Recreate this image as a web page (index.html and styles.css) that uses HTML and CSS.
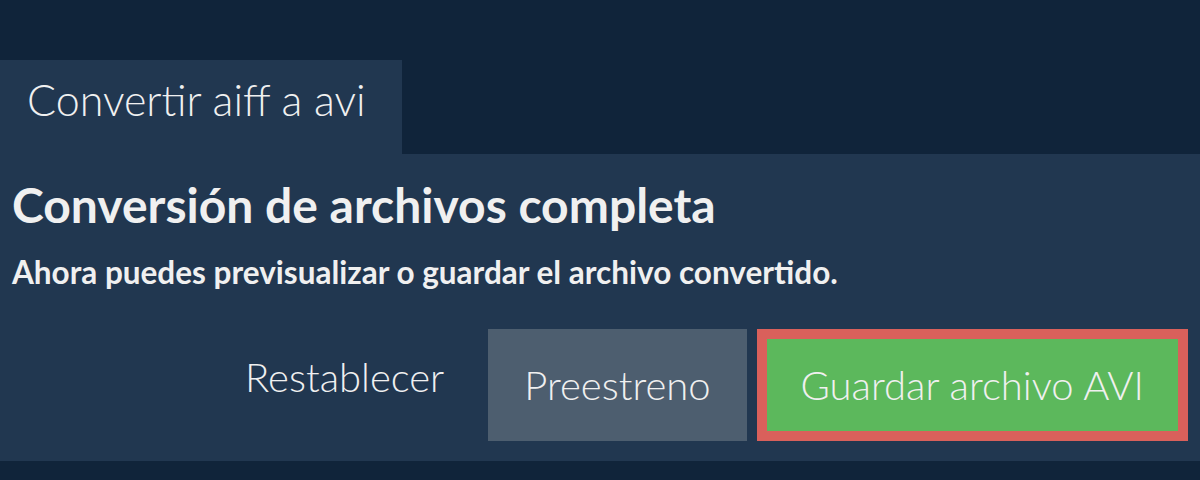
FILE: index.html
```html
<!DOCTYPE html>
<html lang="es">
<head>
    <meta charset="UTF-8">
    <meta name="viewport" content="width=device-width, initial-scale=1.0">
    <title>Convertir aiff a avi</title>
    <link rel="stylesheet" href="styles.css">
</head>
<body>
    <div class="tabs">
        <div class="tab">Convertir aiff a avi</div>
    </div>

    <div class="panel">
        <h2 class="panel-title">Conversión de archivos completa</h2>
        <p class="panel-text">Ahora puedes previsualizar o guardar el archivo convertido.</p>

        <div class="button-row">
            <button class="button button-link">Restablecer</button>
            <button class="button button-grey">Preestreno</button>
            <button class="button button-save">Guardar archivo AVI</button>
        </div>
    </div>
</body>
</html>
```

FILE: styles.css
```css
body {
    margin: 0;
    font-family: Lato, "Noto Sans", sans-serif;
    background-color: #10243a;
    color: #f0f0f0;
}

.tabs {
    padding-top: 60px;
    display: flex;
}

.tab {
    background: #213750;
    width: 402px;
    height: 94px;
    box-sizing: border-box;
    padding: 14px 0 0 27px;
    font-size: 43px;
    font-weight: 300;
    line-height: 1.2;
}

.panel {
    background: #213750;
    height: 307px;
    box-sizing: border-box;
    padding: 22px 12px 0 12px;
}

.panel-title {
    margin: 0;
    font-size: 48px;
    font-weight: 700;
    line-height: 1.2;
}

.panel-text {
    margin: 20px 0 0 0;
    font-size: 31.5px;
    font-weight: 700;
    line-height: 1.2;
}

.button-row {
    margin-top: 38px;
    display: flex;
    justify-content: flex-end;
    gap: 10px;
}

.button {
    font-family: inherit;
    font-size: 40px;
    font-weight: 300;
    line-height: 1.2;
    color: #f0f0f0;
    height: 112px;
    padding: 0 34px;
    border: none;
    background: none;
    cursor: pointer;
}

.button-link {
    padding-bottom: 16px;
}

.button-grey {
    background: #4d5e6f;
    padding: 0 36px;
}

.button-save {
    border: 10px solid #d9605b;
    background: #5cb85c;
}
```
